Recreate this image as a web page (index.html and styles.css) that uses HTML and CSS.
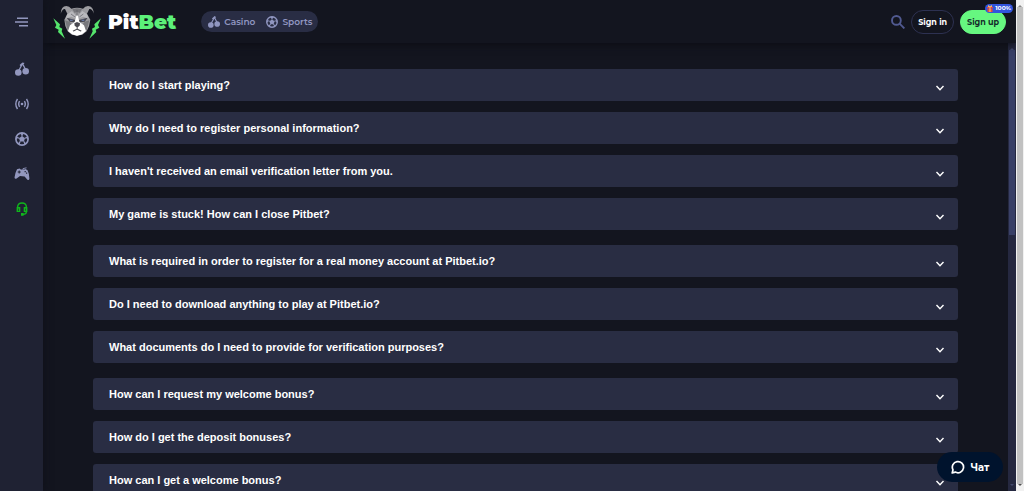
FILE: index.html
```html
<!DOCTYPE html>
<html lang="en">
<head>
  <meta charset="UTF-8">
  <meta name="viewport" content="width=device-width, initial-scale=1.0">
  <title>PitBet - FAQ</title>
  <link rel="stylesheet" href="styles.css">
</head>
<body>
  <!-- shared icons -->
  <svg class="sprite" aria-hidden="true">
    <symbol id="cherry" viewBox="0 0 14 14">
      <circle cx="3.3" cy="10.5" r="3.3"/>
      <circle cx="10.7" cy="9.3" r="3.3"/>
      <path d="M3.8 8.5 7.5 1.6 10.3 7M5 3.4 7.6 1.1 9.2 1.4" fill="none" stroke="currentColor" stroke-width="1.3"/>
    </symbol>
    <symbol id="ball" viewBox="0 0 14 14">
      <circle cx="7" cy="7" r="6.1" fill="none" stroke="currentColor" stroke-width="1.6"/>
      <path d="M7 4 10 6.2 8.9 9.6H5.1L4 6.2z"/>
      <path d="M7 4.2V2M9.8 6.2 12.2 5.4M8.7 9.4 10.2 11.6M5.3 9.4 3.8 11.6M4.2 6.2 1.8 5.4" fill="none" stroke="currentColor" stroke-width="1.2"/>
      <path d="M4.2 1h5.6L7 3.2zM13.2 4.2 13.3 8.4 11.5 6zM12 11 8.4 13.4 9.4 10.8zM2 11 5.6 13.4 4.6 10.8zM.8 4.2.7 8.4 2.5 6z"/>
    </symbol>
    <symbol id="chevron" viewBox="0 0 10 10">
      <path d="M1.5 3 5 6.7 8.5 3" fill="none" stroke="currentColor" stroke-width="1.4"/>
    </symbol>
  </svg>

  <div class="page">
    <aside class="sidebar">
      <button type="button" class="side_item menu_btn" aria-label="Menu">
        <svg width="13" height="10" viewBox="0 0 13 10" fill="none" stroke="currentColor" stroke-width="1.4"><path d="M2 1.2h11M0 5h13M4 8.8h9"/></svg>
      </button>
      <nav class="side_nav">
        <a href="#" class="side_item" aria-label="Casino"><svg width="14" height="14"><use href="#cherry"/></svg></a>
        <a href="#" class="side_item" aria-label="Live">
          <svg width="14" height="14" viewBox="0 0 14 14" fill="none" stroke="currentColor" stroke-width="1.4"><circle cx="7" cy="7" r="1.3" fill="currentColor" stroke="none"/><path d="M4.6 4.2Q2.8 7 4.6 9.8M9.4 4.2Q11.2 7 9.4 9.8M2.5 2Q-.9 7 2.5 12M11.5 2Q14.9 7 11.5 12"/></svg>
        </a>
        <a href="#" class="side_item" aria-label="Sports"><svg width="14" height="14"><use href="#ball"/></svg></a>
        <a href="#" class="side_item" aria-label="Games">
          <svg width="16" height="14" viewBox="0 0 16 14"><path fill-rule="evenodd" d="M3 2.2 5.6 1.5 6.8 2.6 10 2.8 11.2 2.1 13.4 3Q15.6 7.3 15.4 11.8 14.8 13.8 13.2 12.4L10.6 9.4 6 9 2.6 11.5Q.8 12.5.5 10.5 1 6 3 2.2ZM4.7 3.5v1H3.7v1h1v1h1v-1h1v-1h-1v-1ZM10.6 4v1.2h1.2V4ZM12 5.6v1.2h1.2V5.6Z"/><path d="M9 3V1.6L12.5.8" fill="none" stroke="currentColor" stroke-width=".9"/></svg>
        </a>
        <a href="#" class="side_item active" aria-label="Support">
          <svg width="12" height="14" viewBox="0 0 12 14" fill="none" stroke="currentColor" stroke-width="1.4"><path d="M1.6 8V5Q1.8 1 6 1T10.4 5V10Q10.2 12.4 7 12.4M1.3 5.8H3.6V9.4H1.3ZM10.7 5.8H8.4V9.4h2.3Z"/><path d="M5 11h2.6v2.8H5z" fill="currentColor" stroke="none"/></svg>
        </a>
      </nav>
    </aside>

    <div class="main">
      <header class="header">
        <a href="#" class="logo" aria-label="PitBet">
          <svg width="49" height="35" viewBox="10 9 147 105">
            <!-- bolts -->
            <path fill="#55e56c" d="M11 52 31 70 29 78 38 83 36 91 46 113 25 93 27 86 16 80 20 72ZM154 52 134 70 136 78 127 83 129 91 119 113 140 93 138 86 149 80 145 72Z"/>
            <!-- head and ears -->
            <path fill="#9c9ca0" d="M53 38 46 24Q38 23 33 38 34 16 50 15 59 16 65 23 82 18 100 23 106 16 115 15 131 16 133 38 128 23 119 24L112 38 122 56Q120 76 111 91L98 101 82 104 67 101 54 91Q45 76 44 56Z"/>
            <path fill="#77777c" d="M68 25 82 22 97 25 90 36 82 32 75 36ZM46 58 60 62 68 72 60 90 54 88ZM119 58 105 62 97 72 105 90 111 88Z"/>
            <path fill="#b9b9bd" d="M53 40 67 30 78 43 77 52 64 47 48 53ZM112 40 98 30 87 43 88 52 101 47 117 53Z"/>
            <!-- eyes -->
            <path fill="#44444e" d="M51 50 77 57 75 64 60 62ZM114 50 88 57 90 64 105 62Z"/>
            <path fill="#6f86bd" d="M61 56h8v3h-8zM96 56h8v3h-8z"/>
            <!-- muzzle -->
            <path fill="#fff" d="M80 44h5l4 19 14 10 6 17-12 10-15 4-15-4-12-10 6-17 14-10Z"/>
            <path fill="#4a4a52" d="M74 67 82 63 91 67 90 74 84 79V83L96 89 92 93 82 87 73 93 69 89 81 83V79L75 74Z"/>
            <path fill="#fff" d="M71 92 82 86 94 92 93 100 82 103 72 100Z"/>
            <path d="M64 39 76 48M101 39 89 48M82 27V42" stroke="#5b5b62" stroke-width="2"/>
          </svg>
          <span class="logo_text">Pit<span>Bet</span></span>
        </a>
        <nav class="switch">
          <a href="#"><svg width="12" height="12"><use href="#cherry"/></svg>Casino</a>
          <a href="#"><svg width="12" height="12"><use href="#ball"/></svg>Sports</a>
        </nav>
        <div class="account">
          <button type="button" class="search" aria-label="Search">
            <svg width="14" height="14" viewBox="0 0 14 14" fill="none" stroke="currentColor" stroke-width="1.9"><circle cx="5.4" cy="5.4" r="4.4"/><path d="m8.6 8.6 4.8 4.8"/></svg>
          </button>
          <button type="button" class="btn">Sign in</button>
          <button type="button" class="btn btn_green">Sign up
            <span class="badge">
              <svg width="6" height="7" viewBox="0 0 6 7"><path fill="#e9493c" d="M0 2h6v1.5H0zM.5 4h5v3h-5z"/><path fill="#f4b568" d="M2.4 2h1.2v5H2.4zM1 0l2 1.3L5 0v2H1z"/></svg>100%
            </span>
          </button>
        </div>
      </header>

      <div class="body">
        <main class="faq">
          <section class="faq_group">
            <button type="button" class="question">How do I start playing?<svg width="10" height="10"><use href="#chevron"/></svg></button>
            <button type="button" class="question">Why do I need to register personal information?<svg width="10" height="10"><use href="#chevron"/></svg></button>
            <button type="button" class="question">I haven't received an email verification letter from you.<svg width="10" height="10"><use href="#chevron"/></svg></button>
            <button type="button" class="question">My game is stuck! How can I close Pitbet?<svg width="10" height="10"><use href="#chevron"/></svg></button>
          </section>
          <section class="faq_group">
            <button type="button" class="question">What is required in order to register for a real money account at Pitbet.io?<svg width="10" height="10"><use href="#chevron"/></svg></button>
            <button type="button" class="question">Do I need to download anything to play at Pitbet.io?<svg width="10" height="10"><use href="#chevron"/></svg></button>
            <button type="button" class="question">What documents do I need to provide for verification purposes?<svg width="10" height="10"><use href="#chevron"/></svg></button>
          </section>
          <section class="faq_group">
            <button type="button" class="question">How can I request my welcome bonus?<svg width="10" height="10"><use href="#chevron"/></svg></button>
            <button type="button" class="question">How do I get the deposit bonuses?<svg width="10" height="10"><use href="#chevron"/></svg></button>
            <button type="button" class="question">How can I get a welcome bonus?<svg width="10" height="10"><use href="#chevron"/></svg></button>
          </section>
        </main>
        <div class="scroll">
          <i class="arrow up"></i>
          <div class="thumb"></div>
          <i class="arrow down"></i>
        </div>
      </div>
    </div>

    <div class="scroll scroll_light">
      <i class="arrow up"></i>
      <div class="thumb"></div>
      <i class="arrow down"></i>
    </div>
  </div>

  <button type="button" class="chat">
    <svg width="14" height="14" viewBox="0 0 14 14" fill="none" stroke="currentColor" stroke-width="1.7"><path d="M1.2 13 2 9.8A5.6 5.6 0 1 1 4.3 12.1Z" stroke-linejoin="round"/></svg>Чат
  </button>
</body>
</html>
```
FILE: styles.css
```css
*{
  margin: 0;
  padding: 0;
  box-sizing: border-box;
}
body{
  background-color: #13151f;
  color: #fff;
  font-family: "Liberation Sans", Arial, sans-serif;
  overflow: hidden;
}
a{
  color: inherit;
  text-decoration: none;
}
button{
  border: none;
  background: none;
  color: inherit;
  font: inherit;
  cursor: pointer;
}
svg{
  flex-shrink: 0;
  fill: currentColor;
}
svg[fill="none"]{
  fill: none;
}
.sprite{
  position: absolute;
  width: 0;
  height: 0;
}
.page{
  display: flex;
  height: 100vh;
}

/* sidebar */
.sidebar{
  width: 43px;
  flex-shrink: 0;
  background-color: #1f2233;
  color: #9297be;
  box-shadow: 0 0 8px #0e1019;
  z-index: 2;
}
.side_item{
  display: flex;
  align-items: center;
  justify-content: center;
  width: 100%;
  height: 35px;
}
.menu_btn{
  height: 44px;
}
.side_nav{
  padding-top: 7px;
}
.side_item.active{
  color: #10b61c;
}
.main{
  flex: 1;
  min-width: 0;
  display: flex;
  flex-direction: column;
}

/* header */
.header{
  display: flex;
  align-items: center;
  height: 43px;
  flex-shrink: 0;
  padding: 0 10px;
  box-shadow: 0 1px 8px #0b0c13;
  font-family: Montserrat, Inter, sans-serif;
  z-index: 1;
}
.logo{
  display: flex;
  align-items: center;
  gap: 6px;
}
.logo_text{
  font-size: 20px;
  font-weight: 900;
}
.logo_text span{
  color: #5cf179;
}
.switch{
  display: flex;
  align-items: center;
  gap: 11px;
  height: 21px;
  margin-left: 25px;
  padding: 0 6px 0 7px;
  border-radius: 11px;
  background-color: #292d44;
  color: #9096c0;
  font-size: 9px;
  font-weight: 600;
}
.switch a{
  display: flex;
  align-items: center;
  gap: 4px;
}
.account{
  display: flex;
  align-items: center;
  gap: 6px;
  margin-left: auto;
}
.search{
  display: flex;
  color: #515a91;
}
.btn{
  position: relative;
  height: 24px;
  padding: 0 6px;
  border: 1px solid #2d3151;
  border-radius: 12px;
  font-size: 8px;
  font-weight: 700;
}
.btn_green{
  border-color: #66f780;
  background-color: #66f780;
  color: #142b2b;
}
.badge{
  position: absolute;
  top: -7px;
  right: -8px;
  display: flex;
  align-items: center;
  gap: 2px;
  height: 9px;
  padding: 0 2px;
  border-radius: 5px;
  background-color: #3155dd;
  color: #fff;
  font-size: 6px;
}

/* questions */
.body{
  flex: 1;
  min-height: 0;
  display: flex;
}
.faq{
  flex: 1;
  display: flex;
  flex-direction: column;
  gap: 15px;
  padding: 26px 50px;
  overflow: hidden;
}
.faq_group{
  display: flex;
  flex-direction: column;
  gap: 11px;
}
.question{
  display: flex;
  align-items: center;
  justify-content: space-between;
  width: 100%;
  height: 32px;
  padding: 0 13px 0 16px;
  border-radius: 3px;
  background-color: #292d43;
  font-size: 11px;
  font-weight: 700;
  text-align: left;
}
.question svg{
  margin-top: 5px;
}

/* scrollbars */
.scroll{
  display: flex;
  flex-direction: column;
  align-items: center;
  width: 8px;
  flex-shrink: 0;
  background-color: #252840;
}
.thumb{
  width: 6px;
  height: 185px;
  background-color: #394067;
}
.arrow{
  height: 7px;
  border: 2px solid transparent;
}
.arrow.up{
  border-bottom-color: #43496c;
  border-top-width: 1px;
}
.arrow.down{
  margin-top: auto;
  border-top-color: #43496c;
}
.scroll_light{
  background-color: #f1f1f1;
  z-index: 2;
}
.scroll_light .thumb{
  flex: 1;
  background-color: #c1c1c1;
}
.scroll_light .up{
  border-bottom-color: #8a8a8a;
}
.scroll_light .down{
  border-top-color: #505050;
}

/* chat */
.chat{
  position: fixed;
  right: 21px;
  bottom: 9px;
  display: flex;
  align-items: center;
  justify-content: center;
  gap: 6px;
  width: 66px;
  height: 30px;
  border-radius: 15px;
  background-color: #00132d;
  font-family: Montserrat, Inter, sans-serif;
  font-size: 10px;
  font-weight: 700;
  z-index: 3;
}
```
